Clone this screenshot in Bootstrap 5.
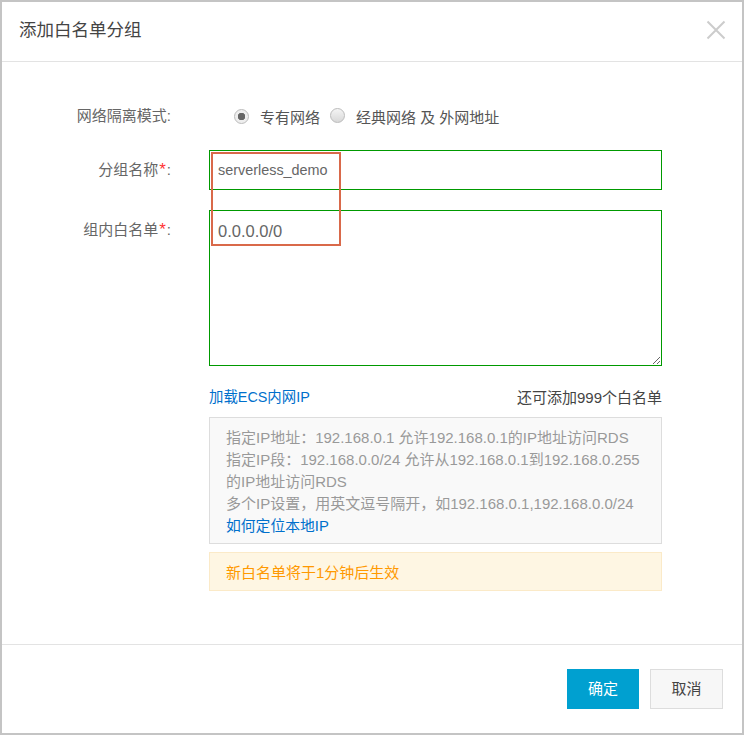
<!DOCTYPE html>
<html lang="zh-CN">
<head>
    <meta charset="UTF-8">
    <meta name="viewport" content="width=device-width, initial-scale=1.0">
    <title>添加白名单分组</title>
    <link href="https://cdn.jsdelivr.net/npm/bootstrap@5.3.0/dist/css/bootstrap.min.css" rel="stylesheet">
    <style>
        html, body { height: 735px; overflow: hidden; }
        body {
            font-family: "Liberation Sans", "Noto Sans CJK SC", sans-serif;
            font-size: 15px;
            color: #555;
            background: #fff;
        }
        .dlg {
            position: relative;
            height: 735px;
            border: 2px solid #c4c4c4;
            display: flex;
            flex-direction: column;
        }
        .dlg-head {
            height: 60px;
            padding-left: 17px;
            padding-bottom: 2px;
            border-bottom: 1px solid #e3e3e3;
            color: #444;
            font-size: 17.5px;
        }
        .dlg-x { margin-right: 16px; margin-top: -2px; }
        .dlg-body { flex: 1; padding-top: 42px; }
        .form-line { display: flex; }
        .lbl {
            width: 169px;
            text-align: right;
            color: #666;
            line-height: 24px;
            flex-shrink: 0;
        }
        .lbl i { color: #f33; font-style: normal; font-size: 17px; padding: 0 1px; line-height: 1; }
        .fld { width: 453px; margin-left: 38px; }
        .radio-line { height: 24px; margin-bottom: 22px; }
        .radio-dot {
            width: 15px;
            height: 15px;
            border-radius: 50%;
            border: 1px solid #bbb;
            background: linear-gradient(#f4f4f4, #d8d8d8);
            display: inline-block;
            flex-shrink: 0;
        }
        .radio-dot.on { background: radial-gradient(circle, #666 0 3.5px, #eee 4px); margin-left: 25px; }
        .radio-dot.off { margin-left: 10px; margin-top: -2px; }
        .radio-text { color: #555; margin-left: 11px; padding-top: 4px; }
        .name-input, .ip-area {
            display: block;
            width: 100%;
            border: 1px solid #090;
            border-radius: 0;
            color: #666;
            padding: 0 8px;
            outline: none;
        }
        .name-input { height: 40px; font-size: 14.4px; font-family: inherit; }
        .ip-area {
            height: 156px;
            padding-top: 8px;
            font-size: 16.5px;
            line-height: 24px;
            font-family: inherit;
        }
        .count-text { color: #444; }
        .link-line { padding-top: 21px; line-height: 21px; }
        .info-box {
            margin-top: 9px;
            height: 127px;
            padding: 9px 16px;
            border: 1px solid #ddd;
            background: #f9f9f9;
            color: #999;
            line-height: 22px;
        }
        .warn-box {
            margin-top: 8px;
            height: 39px;
            padding-left: 16px;
            line-height: 39px;
            border: 1px solid #fbeac8;
            background: #fef6e3;
            color: #f90;
        }
        .blue-link { color: #0070cc; text-decoration: none; font-size: 14.4px; }
        .info-box .blue-link { font-size: 14.8px; }
        .dlg-foot {
            height: 89px;
            padding: 24px 19px 0 0;
            border-top: 1px solid #e3e3e3;
        }
        .btn-ok, .btn-no {
            height: 40px;
            border-radius: 0;
            font-size: 15px;
            padding: 0;
        }
        .btn-ok { width: 72px; background: #00a0d0; border: 1px solid #00a0d0; color: #fff; }
        .btn-no { width: 73px; background: #f7f7f7; border: 1px solid #ddd; color: #444; margin-left: 11px; }
        .mark-box {
            position: absolute;
            left: 209px;
            top: 150px;
            width: 130px;
            height: 94px;
            border: 2px solid #d9694a;
            pointer-events: none;
        }
    </style>
</head>
<body>
    <div class="dlg">
        <div class="dlg-head d-flex align-items-center justify-content-between">
            <span>添加白名单分组</span>
            <svg class="dlg-x" width="20" height="20" viewBox="0 0 20 20">
                <path d="M1.5 1.5L18.5 18.5M18.5 1.5L1.5 18.5" stroke="#ccc" stroke-width="2" fill="none"/>
            </svg>
        </div>
        <div class="dlg-body">
            <div class="form-line radio-line">
                <div class="lbl">网络隔离模式:</div>
                <div class="fld d-flex align-items-center">
                    <span class="radio-dot on"></span>
                    <span class="radio-text">专有网络</span>
                    <span class="radio-dot off"></span>
                    <span class="radio-text">经典网络 及 外网地址</span>
                </div>
            </div>
            <div class="form-line mb-3 pb-1">
                <div class="lbl pt-2">分组名称<i>*</i>:</div>
                <div class="fld"><input class="name-input" value="serverless_demo"></div>
            </div>
            <div class="form-line">
                <div class="lbl pt-2">组内白名单<i>*</i>:</div>
                <div class="fld">
                    <textarea class="ip-area">
0.0.0.0/0</textarea>
                    <div class="link-line d-flex justify-content-between align-items-center">
                        <a href="#" class="blue-link">加载ECS内网IP</a>
                        <span class="count-text">还可添加999个白名单</span>
                    </div>
                    <div class="info-box">
                        指定IP地址：192.168.0.1 允许192.168.0.1的IP地址访问RDS<br>
                        指定IP段：192.168.0.0/24 允许从192.168.0.1到192.168.0.255的IP地址访问RDS<br>
                        多个IP设置，用英文逗号隔开，如192.168.0.1,192.168.0.0/24<br>
                        <a href="#" class="blue-link">如何定位本地IP</a>
                    </div>
                    <div class="warn-box">新白名单将于1分钟后生效</div>
                </div>
            </div>
        </div>
        <div class="dlg-foot d-flex justify-content-end align-items-start">
            <button class="btn btn-ok">确定</button>
            <button class="btn btn-no">取消</button>
        </div>
        <div class="mark-box"></div>
    </div>
    <script src="https://cdn.jsdelivr.net/npm/bootstrap@5.3.0/dist/js/bootstrap.bundle.min.js"></script>
</body>
</html>
